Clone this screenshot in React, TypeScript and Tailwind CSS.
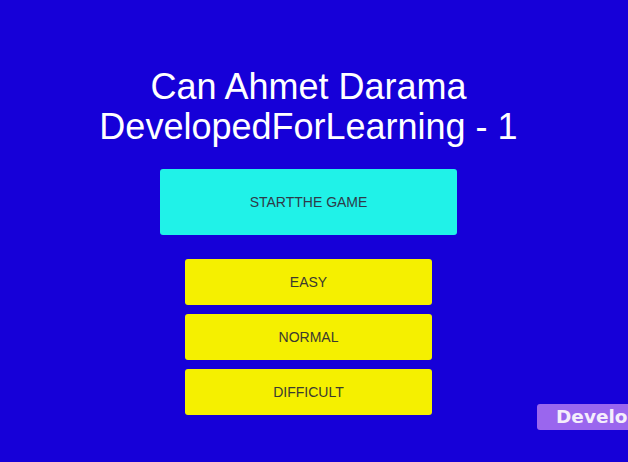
export default function App() {
  const levels = ["EASY", "NORMAL", "DIFFICULT"];

  return (
    <div className="relative h-[462px] w-[628px] overflow-hidden bg-[#1600d8] font-['Liberation_Sans',Arial,sans-serif]">
      <div className="flex w-[617px] flex-col items-center pt-[67px]">
        <h1 className="text-center text-[36px] leading-[40px] text-white">
          Can Ahmet Darama
          <br />
          DevelopedForLearning - 1
        </h1>

        <button className="mt-[22px] flex h-[66px] w-[297px] items-center justify-center rounded-[3px] bg-[#20f2e8] text-[14px] text-[#2e3a48]">
          STARTTHE GAME
        </button>

        <div className="mt-6 flex flex-col gap-[9px]">
          {levels.map((level) => (
            <button
              key={level}
              className="flex h-[46px] w-[247px] items-center justify-center rounded-[3px] bg-[#f5f000] text-[14px] text-[#3a3a30]"
            >
              {level}
            </button>
          ))}
        </div>
      </div>

      {/* badge runs off the right edge in the original */}
      <div className="absolute left-[537px] top-[404px] flex h-[26px] items-center whitespace-nowrap rounded-[3px] bg-[#9a66ee] pl-[19px] pr-4 font-['DejaVu_Sans',sans-serif] text-[18.5px] font-bold text-[#f4eefc]">
        DevelopedForLearning
      </div>
    </div>
  );
}
